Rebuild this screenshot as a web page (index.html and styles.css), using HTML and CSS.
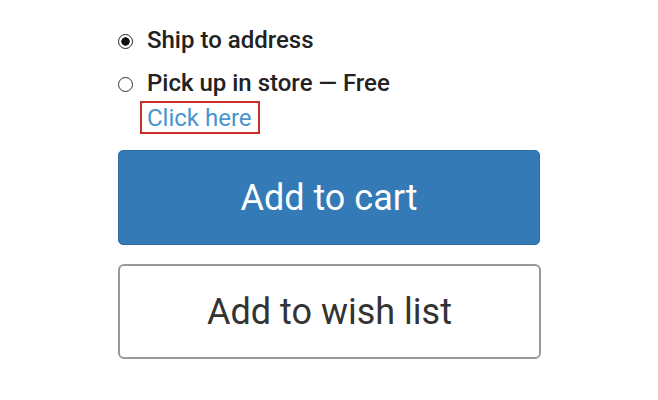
FILE: index.html
```html
<!DOCTYPE html>
<html>
<head>
<meta charset="utf-8">
<link rel="stylesheet" href="styles.css">
</head>
<body>
<div class="panel">
  <label class="option">
    <input type="radio" name="ship" class="radio" checked>
    <span class="option-text">Ship to address</span>
  </label>
  <label class="option option-second">
    <input type="radio" name="ship" class="radio">
    <span class="option-text">Pick up in store — Free</span>
  </label>
  <div class="link-row">
    <a class="click-link" href="#">Click here</a>
  </div>
  <button class="btn btn-primary">Add to cart</button>
  <button class="btn btn-default">Add to wish list</button>
</div>
</body>
</html>
```
FILE: styles.css
```css
html, body {
  margin: 0;
  padding: 0;
  background: #ffffff;
}
body {
  font-family: Roboto, "Liberation Sans", sans-serif;
  color: #333333;
}
.panel {
  display: flex;
  flex-direction: column;
  align-items: flex-start;
  padding: 26px 0 0 118px;
  width: 422px;
}
.option {
  display: flex;
  align-items: center;
  height: 28px;
  font-size: 24px;
  line-height: 28px;
  font-weight: 500;
  color: #222222;
}
.option-second {
  margin-top: 15px;
}
.radio {
  appearance: none;
  -webkit-appearance: none;
  flex: none;
  margin: 0 14px 0 0;
  width: 15px;
  height: 15px;
  border: 1px solid #333333;
  border-radius: 50%;
  box-sizing: border-box;
  background: #ffffff;
  position: relative;
  top: 1px;
}
.radio:checked {
  border-color: #222222;
  background: radial-gradient(circle, #111111 0 3.9px, #ffffff 4.5px);
}
.link-row {
  margin-top: 4px;
  margin-left: 22px;
}
.click-link {
  display: inline-block;
  border: 2px solid #c9302c;
  padding: 1px 6px 0 5px;
  font-size: 24px;
  line-height: 28px;
  color: #4a95cf;
  text-decoration: none;
}
.btn {
  box-sizing: border-box;
  width: 423px;
  height: 95px;
  font-family: Roboto, "Liberation Sans", sans-serif;
  font-size: 36px;
  line-height: 40px;
  padding: 0;
  cursor: pointer;
}
.btn-primary {
  width: 422px;
  margin-top: 16px;
  background: #337ab7;
  border: 1px solid #2e6da4;
  border-radius: 5px;
  color: #ffffff;
}
.btn-default {
  margin-top: 19px;
  background: #ffffff;
  border: 2px solid #999999;
  border-radius: 6px;
  color: #333333;
}
```
